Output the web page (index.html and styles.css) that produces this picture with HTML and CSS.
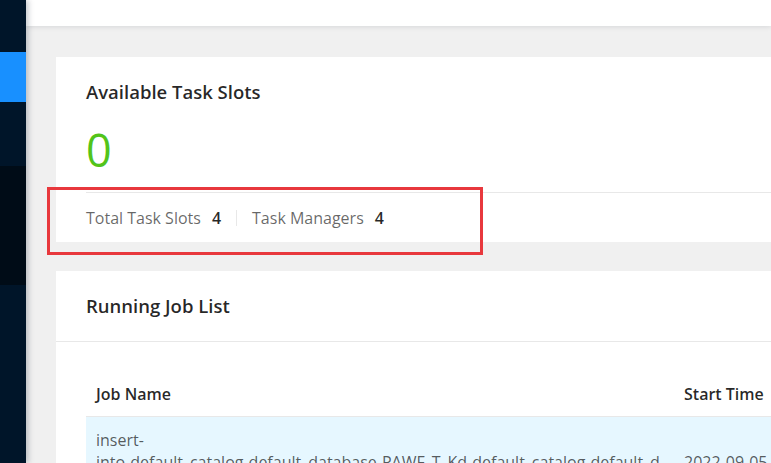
FILE: index.html
```html
<!DOCTYPE html>
<html lang="en">
<head>
  <meta charset="UTF-8" />
  <title>Flink Overview</title>
  <link rel="stylesheet" href="styles.css">
</head>
<body>
<div class="layout">
  <aside class="sider">
    <div class="menu-top"></div>
    <div class="menu-item selected"></div>
    <div class="menu-group"><span class="caret">&#x2c4;</span></div>
    <div class="submenu"></div>
    <div class="menu-rest"></div>
  </aside>
  <div class="main">
    <header class="header"></header>
    <div class="content">
      <div class="card slots">
        <div class="slots-body">
          <div class="card-title">Available Task Slots</div>
          <div class="big-number">0</div>
        </div>
        <div class="slots-footer">
          <span class="label">Total Task Slots</span><span class="value">4</span>
          <span class="divider"></span>
          <span class="label">Task Managers</span><span class="value">4</span>
        </div>
        <div class="highlight"></div>
      </div>

      <div class="card jobs">
        <div class="card-head">
          <div class="card-title">Running Job List</div>
        </div>
        <div class="card-body">
          <table class="job-table">
            <thead>
              <tr>
                <th class="col-name">Job Name</th>
                <th class="col-time">Start Time</th>
              </tr>
            </thead>
            <tbody>
              <tr class="row-hover">
                <td class="col-name">insert-<br>into-default_catalog-default_database-PAWF_T_Kd-default_catalog-default_database</td>
                <td class="col-time"><br>2022-09-05 10:21:43</td>
              </tr>
            </tbody>
          </table>
        </div>
      </div>
    </div>
  </div>
</div>
</body>
</html>
```

FILE: styles.css
```css
html, body {
  margin: 0;
  height: 100%;
  overflow: hidden;
}
body {
  font-family: "Open Sans", "Noto Sans", sans-serif;
  background: #f0f0f0;
  color: rgba(0, 0, 0, 0.65);
}
.layout {
  display: flex;
  height: 100%;
}
.sider {
  width: 26px;
  flex: none;
  display: flex;
  flex-direction: column;
  background: #001529;
  position: relative;
  z-index: 2;
  box-shadow: 2px 0 6px rgba(0, 21, 41, 0.25);
}
.menu-top {
  height: 52px;
}
.menu-item.selected {
  height: 50px;
  background: #1890ff;
}
.menu-group {
  height: 64px;
  position: relative;
  overflow: hidden;
}
.caret {
  position: absolute;
  left: -4px;
  top: 30px;
  color: #fff;
  font-size: 12px;
  line-height: 12px;
}
.submenu {
  height: 119px;
  background: #000c17;
}
.menu-rest {
  flex: 1;
}
.main {
  flex: 1;
  display: flex;
  flex-direction: column;
  min-width: 0;
}
.header {
  height: 26px;
  flex: none;
  background: #fff;
  box-shadow: 0 1px 5px rgba(0, 21, 41, 0.1);
  position: relative;
  z-index: 1;
}
.content {
  padding: 31px 0 0 30px;
  width: 1000px;
}
.card {
  background: #fff;
  position: relative;
}
.card-title {
  font-size: 18.5px;
  font-weight: 600;
  color: rgba(0, 0, 0, 0.85);
  line-height: 28px;
}
.slots-body {
  padding: 21px 30px 0;
  height: 135px;
  box-sizing: border-box;
}
.big-number {
  margin-top: 18px;
  font-size: 45px;
  line-height: 52px;
  color: #52c41a;
}
.slots-footer {
  margin: 0 30px;
  border-top: 1px solid #e8e8e8;
  height: 49px;
  display: flex;
  align-items: center;
  font-size: 16px;
}
.label {
  color: rgba(0, 0, 0, 0.6);
}
.value {
  margin-left: 11px;
  font-weight: 600;
  color: rgba(0, 0, 0, 0.85);
}
.divider {
  width: 1px;
  height: 16px;
  background: #e8e8e8;
  margin: 0 15px;
}
.highlight {
  position: absolute;
  left: -9px;
  top: 130px;
  width: 430px;
  height: 62px;
  border: 3px solid #e8383d;
}
.jobs {
  margin-top: 29px;
}
.card-head {
  padding: 0 30px;
  height: 70px;
  display: flex;
  align-items: center;
  border-bottom: 1px solid #e8e8e8;
}
.card-body {
  padding: 30px 30px;
}
.job-table {
  border-collapse: collapse;
  table-layout: fixed;
  width: 100%;
  font-size: 16px;
}
.job-table th {
  text-align: left;
  font-weight: 600;
  color: rgba(0, 0, 0, 0.85);
  padding: 11px 10px;
  line-height: 22px;
  border-bottom: 1px solid #e8e8e8;
}
.job-table td {
  padding: 12px 10px;
  line-height: 22px;
  vertical-align: top;
}
.col-name {
  width: 568px;
  word-break: break-all;
}
.col-time {
  white-space: nowrap;
  overflow: hidden;
}
.row-hover td {
  background: #e6f7ff;
}
```
